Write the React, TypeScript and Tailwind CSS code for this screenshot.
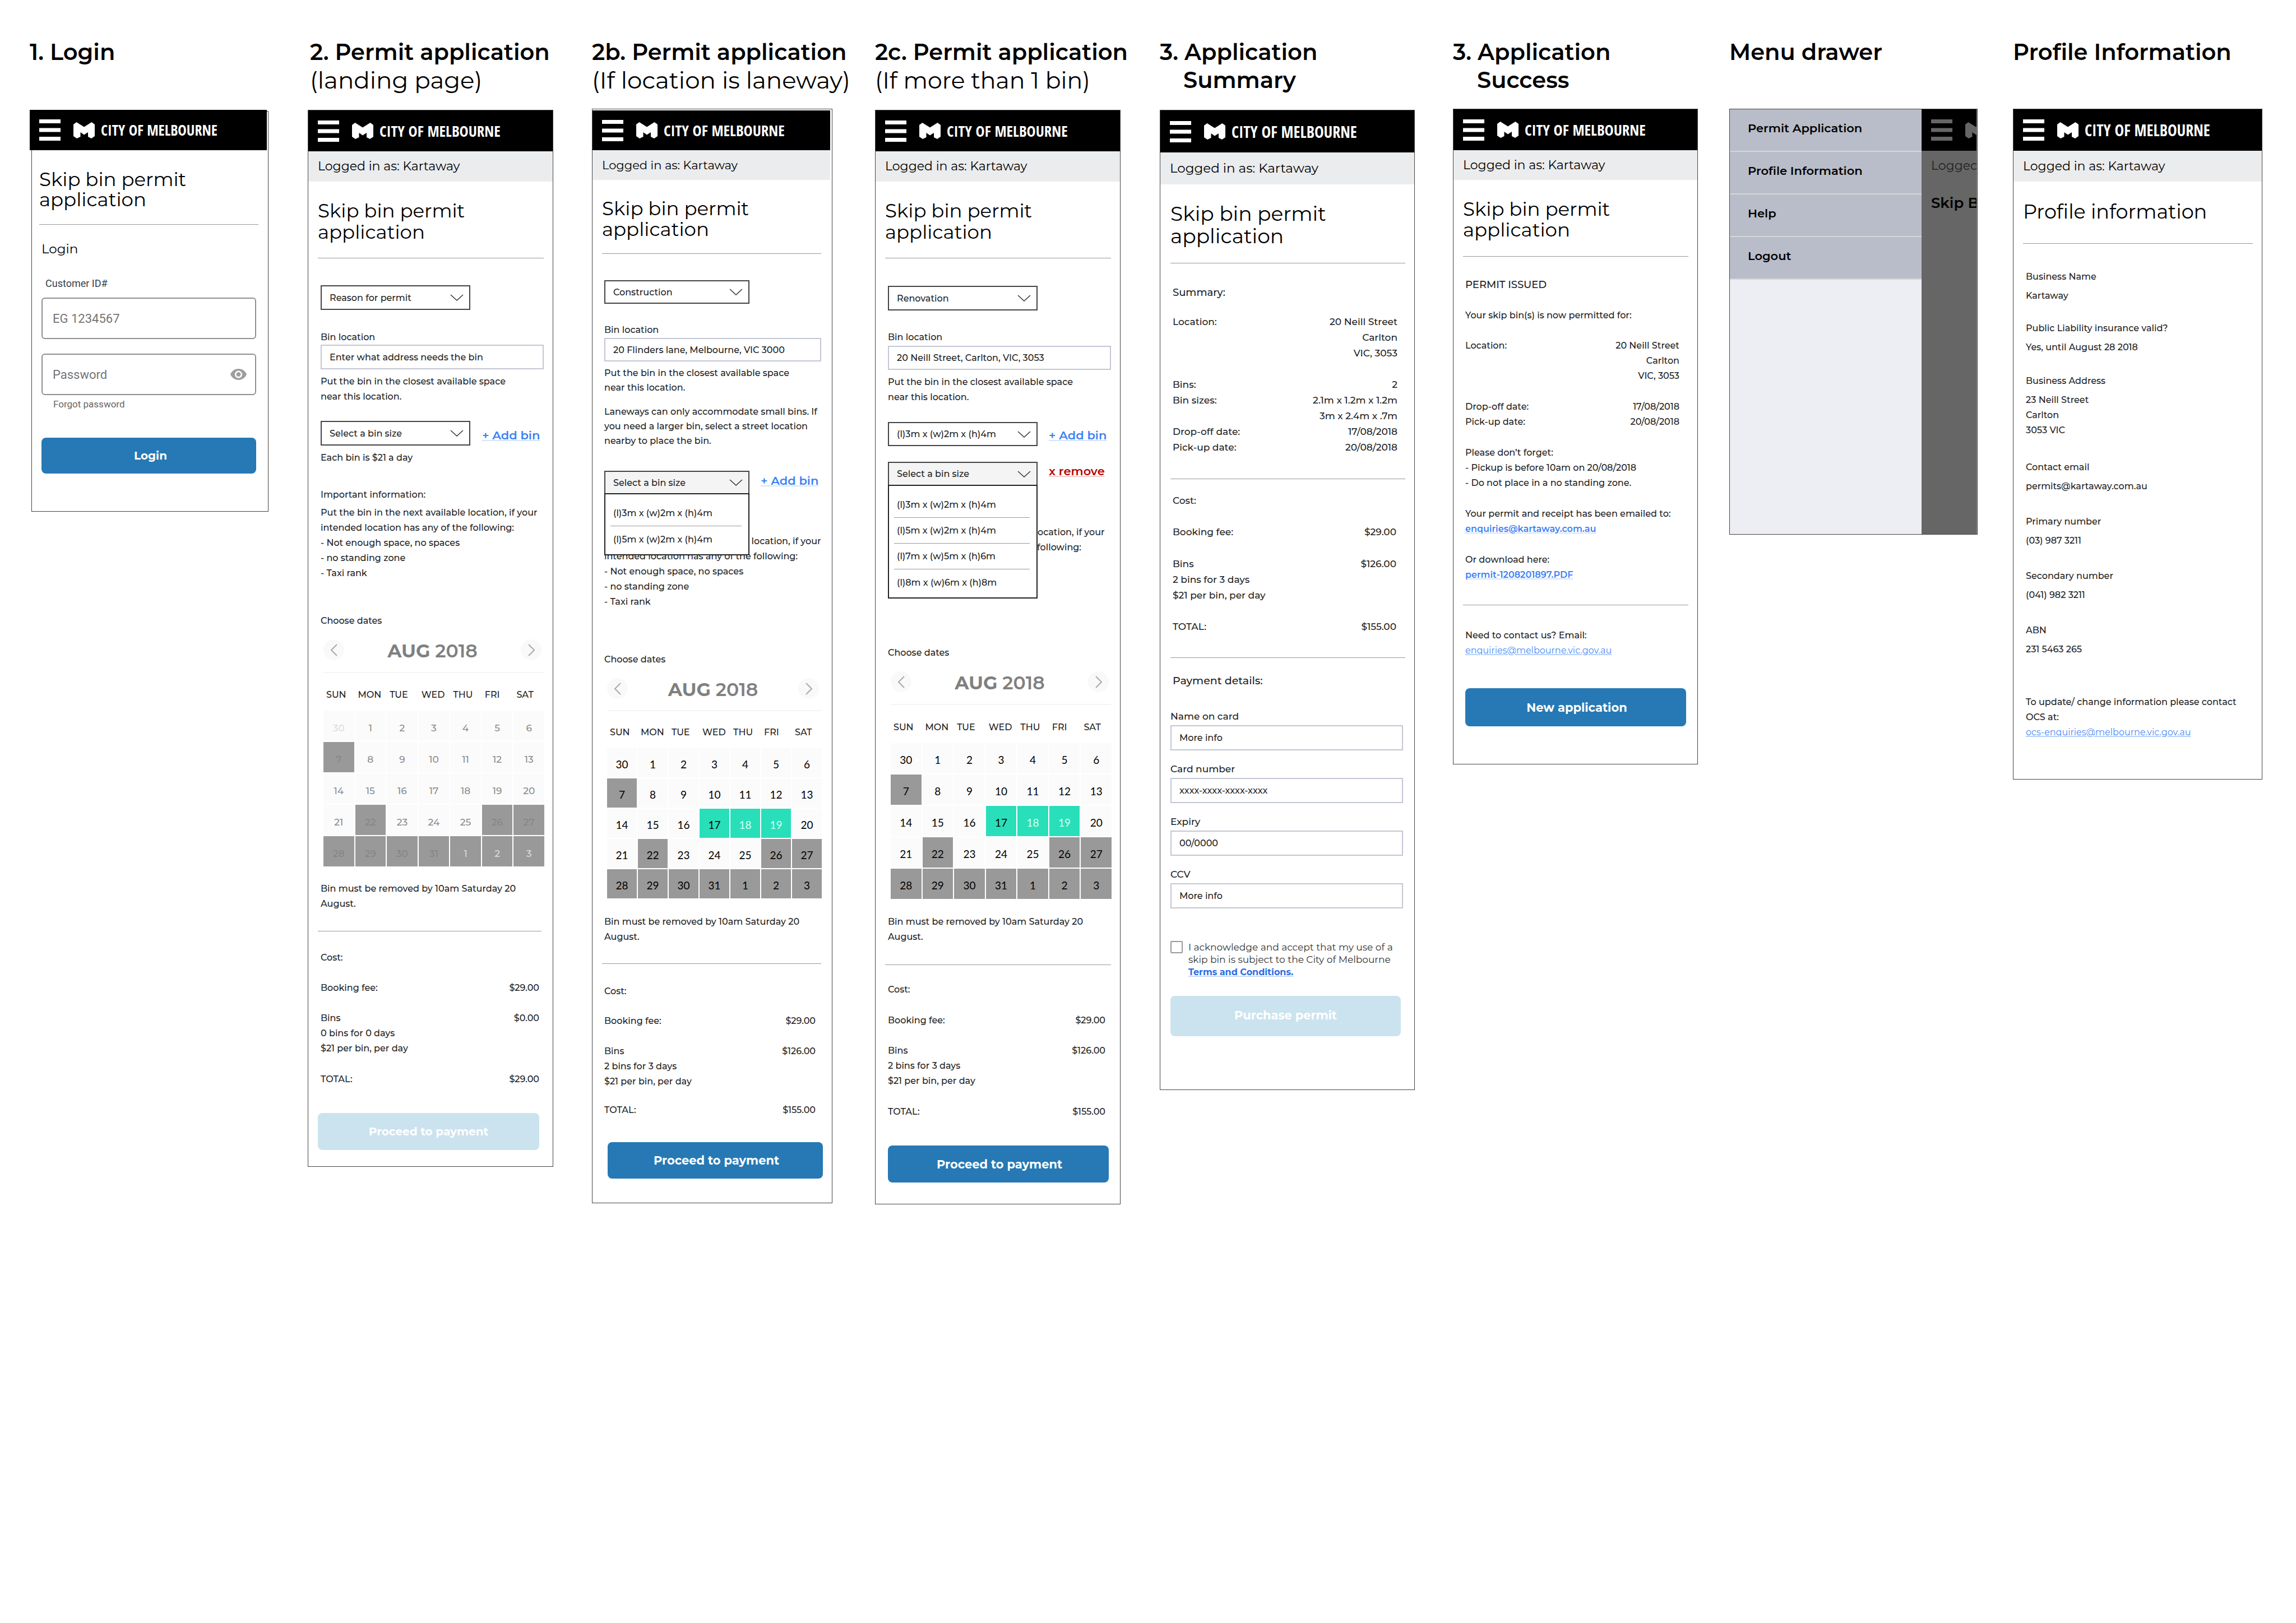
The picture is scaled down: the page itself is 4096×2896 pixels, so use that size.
import { useId, type ReactNode } from "react";

/* ---------- Brand header ---------- */

function MenuIcon() {
  return (
    <svg viewBox="0 0 38 38" className="h-[38px] w-[38px]" fill="currentColor" aria-hidden="true">
      <rect x="0" y="0" width="38" height="7" />
      <rect x="0" y="15.5" width="38" height="7" />
      <rect x="0" y="31" width="38" height="7" />
    </svg>
  );
}

function BrandMark() {
  return (
    <svg viewBox="0 0 38 29" className="h-[29px] w-[38px] shrink-0" fill="currentColor" aria-hidden="true">
      <path d="M0 4 5.5 0 19 8.5 32.5 0 38 4V25L32 29 26 26V18L19 22.5 12.5 18V26L6 29 0 25Z" />
    </svg>
  );
}

function Header({
  className = "h-[73px]",
  tone = "text-white",
  wordmark = "text-[27px]",
}: {
  className?: string;
  tone?: string;
  wordmark?: string;
}) {
  return (
    <header className={`flex items-center bg-black pl-[17px] ${tone} ${className}`}>
      <button type="button" aria-label="Open menu" className="shrink-0">
        <MenuIcon />
      </button>
      <div className="ml-[23px] flex items-center gap-[11px]">
        <BrandMark />
        <span className={`whitespace-nowrap font-['Open_Sans_Condensed','Roboto_Condensed',sans-serif] leading-[30px] font-bold ${wordmark}`}>
          CITY OF MELBOURNE
        </span>
      </div>
    </header>
  );
}

function LoggedIn({ className = "h-[54px] text-[22px]" }: { className?: string }) {
  return (
    <p className={`flex items-center bg-[#ebecee] pb-px pl-[17px] font-normal whitespace-nowrap text-black ${className}`}>
      Logged in as: Kartaway
    </p>
  );
}

/* ---------- Shared pieces ---------- */

function Screen({ lines, frame, children }: { lines: ReactNode; frame: string; children: ReactNode }) {
  return (
    <section className="min-w-0">
      <h2 className="min-h-[194px] pt-[68px] text-[40px] leading-[50px] font-semibold whitespace-nowrap text-black">
        {lines}
      </h2>
      <div className={`w-full border border-[#444] bg-white text-[16px] leading-[27px] font-medium text-[#222] ${frame}`}>
        {children}
      </div>
    </section>
  );
}

function Title({ className }: { className: string }) {
  return (
    <h1 className={`font-normal text-black ${className}`}>
      Skip bin permit
      <br />
      application
    </h1>
  );
}

function Rule({ className }: { className: string }) {
  return <hr className={`h-[2px] border-0 border-t border-[#999] ${className}`} />;
}

function SelectBox({
  value,
  label,
  className,
  open = false,
  options,
}: {
  value: string;
  label: string;
  className: string;
  open?: boolean;
  options?: string[];
}) {
  return (
    <div className={`relative shrink-0 ${className}`}>
      <select
        aria-label={label}
        defaultValue={value}
        className={`h-full w-full appearance-none border-2 border-[#444] pl-[14px] text-[16px] text-[#222] ${open ? "bg-[#f4f4f4]" : "bg-white"}`}
      >
        <option>{value}</option>
      </select>
      <svg
        viewBox="0 0 24 12"
        className="pointer-events-none absolute top-1/2 right-3 h-3 w-6 -translate-y-1/2"
        fill="none"
        stroke="#333"
        strokeWidth="1.5"
        aria-hidden="true"
      >
        <path d="M1 1 12 11 23 1" />
      </svg>
      {options && (
        <ul className="absolute top-full left-0 z-10 -mt-[2px] w-full border-2 border-[#222] bg-white pt-[11px] pr-3 pb-1 pl-[9px]">
          {options.map((o) => (
            <li key={o} className="flex h-[46px] items-center border-b border-[#999] pl-[5px] last:border-b-0">
              {o}
            </li>
          ))}
        </ul>
      )}
    </div>
  );
}

function TextField({
  label,
  value,
  labelClass,
  inputClass,
}: {
  label: string;
  value: string;
  labelClass: string;
  inputClass: string;
}) {
  const id = useId();
  return (
    <div>
      <label htmlFor={id} className={`block ${labelClass}`}>
        {label}
      </label>
      <input
        id={id}
        defaultValue={value}
        className={`block w-full border-2 border-[#c3c7d4] bg-white pl-[14px] text-[16px] text-[#222] ${inputClass}`}
      />
    </div>
  );
}

function LinkButton({ children, className }: { children: ReactNode; className: string }) {
  return (
    <button
      type="button"
      className={`self-start text-[21px] leading-[27px] font-semibold whitespace-nowrap underline decoration-2 underline-offset-1 ${className}`}
    >
      {children}
    </button>
  );
}

const addBinTone = "text-[#3a80f6] decoration-[#d5e3fe]";

/* ---------- Calendar ---------- */

const DAYS = ["SUN", "MON", "TUE", "WED", "THU", "FRI", "SAT"];
const WEEKS = [
  ["30", "1", "2", "3", "4", "5", "6"],
  ["7", "8", "9", "10", "11", "12", "13"],
  ["14", "15", "16", "17", "18", "19", "20"],
  ["21", "22", "23", "24", "25", "26", "27"],
  ["28", "29", "30", "31", "1", "2", "3"],
];
const isBlocked = (w: number, d: string) => w === 4 || (w === 1 && d === "7") || (w === 3 && ["22", "26", "27"].includes(d));

function cellTone(active: boolean, w: number, d: string) {
  if (isBlocked(w, d)) {
    if (active) return "bg-[#999] text-black";
    return w === 4 && d.length === 1 ? "bg-[#999] text-[#dcdcdc]" : "bg-[#999] text-[#858585]";
  }
  if (active) {
    if (d === "17") return "bg-[#29dfb9] text-black";
    if (d === "18" || d === "19") return "bg-[#29dfb9] text-[#d9fff6]";
    return "bg-[#fbfbfb] text-black";
  }
  return w === 0 && d === "30" ? "bg-[#fbfbfb] text-[#dcdcdc]" : "bg-[#fbfbfb] text-[#8c8c8c]";
}

function MonthButton({ label, d }: { label: string; d: string }) {
  return (
    <button type="button" aria-label={label} className="flex h-[37px] w-[37px] items-center justify-center rounded-full bg-[#f9f9f9]">
      <svg viewBox="0 0 12 22" className="h-[22px] w-3" fill="none" stroke="#aaa" strokeWidth="2" aria-hidden="true">
        <path d={d} />
      </svg>
    </button>
  );
}

function Calendar({
  active,
  navClass,
  ruleClass,
  headClass,
  gridGap,
  cellClass,
}: {
  active: boolean;
  navClass: string;
  ruleClass: string;
  headClass: string;
  gridGap: string;
  cellClass: string;
}) {
  return (
    <div className="ml-[5px]">
      <div className={`mr-1 flex items-center justify-between ${navClass}`}>
        <MonthButton label="Previous month" d="M11 1 1 11 11 21" />
        <h3 className="pt-1 text-[33px] leading-[37px] text-[#808080]">
          <span className="font-bold">AUG</span> <span className="font-semibold">2018</span>
        </h3>
        <MonthButton label="Next month" d="M1 1 11 11 1 21" />
      </div>
      <div className={`h-[2px] bg-[#f4f4f4] ${ruleClass}`} />
      <div className="-mr-[3px]">
        <table className="w-full table-fixed border-collapse">
          <thead>
            <tr>
              {DAYS.map((d) => (
                <th key={d} scope="col" className={`p-0 pl-[5px] text-left font-medium ${headClass}`}>
                  {d}
                </th>
              ))}
            </tr>
            <tr aria-hidden="true">
              <td colSpan={7} className={`p-0 ${gridGap}`} />
            </tr>
          </thead>
          <tbody>
            {WEEKS.map((week, w) => (
              <tr key={w}>
                {week.map((d) => (
                  <td key={d} className="p-0 pr-[2px] pb-[2px]">
                    <button
                      type="button"
                      disabled={isBlocked(w, d)}
                      className={`block w-full ${active ? "pt-1 font-['Lato',sans-serif] text-[19px] font-normal" : "pt-2 text-[17px] font-medium"} ${cellClass} ${cellTone(active, w, d)}`}
                    >
                      {d}
                    </button>
                  </td>
                ))}
              </tr>
            ))}
          </tbody>
        </table>
      </div>
    </div>
  );
}

/* ---------- Key/value rows ---------- */

function Row({ label, value }: { label: ReactNode; value?: ReactNode }) {
  return (
    <div className="flex justify-between">
      <dt>{label}</dt>
      <dd className="text-right">{value}</dd>
    </div>
  );
}

function BinsLabel({ count, days }: { count: number; days: number }) {
  return (
    <>
      Bins
      <br />
      {count} bins for {days} days
      <br />
      $21 per bin, per day
    </>
  );
}

function ImportantInfo({ className }: { className: string }) {
  return (
    <div className={className}>
      <p>Important information:</p>
      <p className="mt-[5px] whitespace-nowrap">
        Put the bin in the next available location, if your
        <br />
        intended location has any of the following:
      </p>
      <ul>
        <li>- Not enough space, no spaces</li>
        <li>- no standing zone</li>
        <li>- Taxi rank</li>
      </ul>
    </div>
  );
}

function ClosestSpace({ className }: { className: string }) {
  return (
    <p className={`whitespace-nowrap ${className}`}>
      Put the bin in the closest available space
      <br />
      near this location.
    </p>
  );
}

function RemovalNote({ className }: { className: string }) {
  return (
    <p className={className}>
      Bin must be removed by 10am Saturday 20
      <br />
      August.
    </p>
  );
}

/* ---------- Screens ---------- */

function LoginScreen() {
  return (
    <section className="min-w-0">
      <h2 className="min-h-[194px] pt-[68px] text-[40px] leading-[50px] font-semibold whitespace-nowrap text-black">1. Login</h2>
      <div className="mt-1 ml-[3px] w-full max-w-[423px] border border-[#444] bg-white pb-[67px]">
        <div className="-mt-[3px] mr-[2px] -ml-1">
          <Header className="h-[72px]" wordmark="text-[26px]" />
        </div>
        <form className="pr-[17px] pl-[13px]" onSubmit={(e) => e.preventDefault()}>
          <Title className="mt-[34px] text-[34px] leading-[36px]" />
          <Rule className="mt-[26px]" />
          <div className="px-1">
            <h3 className="mt-[27px] text-[23px] leading-[30px] text-black">Login</h3>
            <div className="font-['Roboto',sans-serif]">
              <label htmlFor="customer-id" className="mt-[33px] block pl-[7px] text-[18px] leading-[27px] text-[#37424a]">
                Customer ID#
              </label>
              <input
                id="customer-id"
                placeholder="EG 1234567"
                className="mt-3 block h-[74px] w-full rounded-[6px] border-2 border-[#8f8f8f] bg-white px-[18px] text-[22px] placeholder:text-[#757575]"
              />
              <div className="relative mt-[26px]">
                <input
                  type="password"
                  aria-label="Password"
                  placeholder="Password"
                  className="block h-[74px] w-full rounded-[6px] border-2 border-[#8f8f8f] bg-white px-[18px] text-[22px] placeholder:text-[#757575]"
                />
                <button type="button" aria-label="Show password" className="absolute top-[26px] right-[17px]">
                  <svg viewBox="1 4.5 22 15" className="h-[22px] w-[29px]" fill="#9e9e9e" aria-hidden="true">
                    <path d="M12 4.5C7 4.5 2.73 7.61 1 12c1.73 4.39 6 7.5 11 7.5s9.27-3.11 11-7.5c-1.73-4.39-6-7.5-11-7.5zM12 17c-2.76 0-5-2.24-5-5s2.24-5 5-5 5 2.24 5 5-2.24 5-5 5zm0-8c-1.66 0-3 1.34-3 3s1.34 3 3 3 3-1.34 3-3-1.34-3-3-3z" />
                  </svg>
                </button>
              </div>
              <a href="#forgot" className="mt-[5px] block pl-[21px] text-[17px] leading-[22px] text-[#666]">
                Forgot password
              </a>
            </div>
            <button type="submit" className="mt-[49px] block h-[64px] w-full rounded-lg bg-[#2679b4] pl-[6px] text-[20px] font-bold text-white">
              Login
            </button>
          </div>
        </form>
      </div>
    </section>
  );
}

function LandingScreen() {
  return (
    <Screen
      frame="mt-[2px] max-w-[438px] pb-[29px]"
      lines={
        <span className="block pl-1">
          2. Permit application
          <span className="block text-[42px] font-normal">(landing page)</span>
        </span>
      }
    >
      <Header />
      <LoggedIn />
      <div className="pr-4 pl-[17px]">
        <Title className="mt-[33px] text-[34px] leading-[38px]" />
        <Rule className="mt-[27px]" />
        <div className="pl-[5px]">
          <SelectBox label="Reason for permit" value="Reason for permit" className="mt-[47px] h-[44px] w-[267px]" />
          <TextField label="Bin location" value="Enter what address needs the bin" labelClass="mt-[35px]" inputClass="h-[44px]" />
          <ClosestSpace className="mt-2" />
          <div className="mt-[30px] flex gap-[21px]">
            <SelectBox label="Bin size" value="Select a bin size" className="h-[44px] w-[267px]" />
            <LinkButton className={`mt-3 ${addBinTone}`}>+ Add bin</LinkButton>
          </div>
          <p className="mt-2">Each bin is $21 a day</p>
          <ImportantInfo className="mt-[39px]" />
          <p className="mt-[58px]">Choose dates</p>
          <Calendar active={false} navClass="mt-[18px]" ruleClass="mt-[19px]" headClass="pt-[25px]" gridGap="h-[15px]" cellClass="h-[54px]" />
          <RemovalNote className="mt-[24px]" />
        </div>
        <Rule className="mt-[35px] mr-1" />
        <div className="pl-[5px]">
          <p className="mt-8">Cost:</p>
          <dl className="pr-2">
            <div className="mt-[27px]">
              <Row label="Booking fee:" value="$29.00" />
            </div>
            <div className="mt-[27px]">
              <Row label={<BinsLabel count={0} days={0} />} value="$0.00" />
            </div>
            <div className="mt-[28px]">
              <Row label="TOTAL:" value="$29.00" />
            </div>
          </dl>
        </div>
        <div className="pr-2">
          <button type="button" disabled className="mt-[47px] block h-[66px] w-full rounded-lg bg-[#cbe3ee] text-[20px] font-bold text-white">
            Proceed to payment
          </button>
        </div>
      </div>
    </Screen>
  );
}

function LanewayScreen() {
  return (
    <Screen
      frame="max-w-[429px] pt-[2px] pb-[43px]"
      lines={
        <>
          2b. Permit application
          <span className="block text-[42px] font-normal">(If location is laneway)</span>
        </>
      }
    >
      <div className="mr-[3px]">
        <Header className="h-[71px]" />
        <LoggedIn className="h-[53px] text-[21px]" />
      </div>
      <div className="pr-[19px] pl-[17px]">
        <Title className="mt-[33px] text-[34px] leading-[37px]" />
        <Rule className="mt-6" />
        <div className="pl-1">
          <SelectBox label="Reason for permit" value="Construction" className="mt-[46px] h-[42px] w-[259px]" />
          <TextField label="Bin location" value="20 Flinders lane, Melbourne, VIC 3000" labelClass="mt-[33px]" inputClass="mt-[1px] h-[42px]" />
          <div className="leading-[26px]">
            <ClosestSpace className="mt-2" />
            <p className="mt-[17px] whitespace-nowrap">
              Laneways can only accommodate small bins. If
              <br />
              you need a larger bin, select a street location
              <br />
              nearby to place the bin.
            </p>
          </div>
          <div className="mt-[40px] flex gap-[20px]">
            <SelectBox
              open
              label="Bin size"
              value="Select a bin size"
              options={["(l)3m x (w)2m x (h)4m", "(l)5m x (w)2m x (h)4m"]}
              className="h-[42px] w-[259px]"
            />
            <LinkButton className={`mt-1 ${addBinTone}`}>+ Add bin</LinkButton>
          </div>
          <ImportantInfo className="mt-[38px]" />
          <p className="mt-[76px]">Choose dates</p>
          <Calendar active navClass="mt-[18px]" ruleClass="mt-[18px]" headClass="pt-[24px]" gridGap="h-[15px]" cellClass="h-[52px]" />
          <RemovalNote className="mt-[26px]" />
        </div>
        <Rule className="mt-[34px]" />
        <div className="pl-1">
          <p className="mt-[34px]">Cost:</p>
          <dl className="pr-[10px]">
            <div className="mt-[26px]">
              <Row label="Booking fee:" value="$29.00" />
            </div>
            <div className="mt-[27px]">
              <Row label={<BinsLabel count={2} days={3} />} value="$126.00" />
            </div>
            <div className="mt-6">
              <Row label="TOTAL:" value="$155.00" />
            </div>
          </dl>
          <div className="-mr-[3px] pl-[6px]">
            <button type="button" className="mt-11 block h-[65px] w-full rounded-lg bg-[#2679b4] pl-1 text-[21px] font-bold text-white">
              Proceed to payment
            </button>
          </div>
        </div>
      </div>
    </Screen>
  );
}

function MultiBinScreen() {
  return (
    <Screen
      frame="mt-[2px] max-w-[438px] pb-[38px]"
      lines={
        <>
          2c. Permit application
          <span className="block text-[41px] font-normal">(If more than 1 bin)</span>
        </>
      }
    >
      <Header />
      <LoggedIn />
      <div className="pr-4 pl-[17px]">
        <Title className="mt-[33px] text-[34px] leading-[38px]" />
        <Rule className="mt-[27px]" />
        <div className="pl-[5px]">
          <SelectBox label="Reason for permit" value="Renovation" className="mt-12 h-[44px] w-[267px]" />
          <TextField label="Bin location" value="20 Neill Street, Carlton, VIC, 3053" labelClass="mt-[34px]" inputClass="mt-[2px] h-[43px]" />
          <ClosestSpace className="mt-2" />
          <div className="mt-[31px] flex gap-[20px]">
            <SelectBox label="First bin size" value="(l)3m x (w)2m x (h)4m" className="h-[43px] w-[267px]" />
            <LinkButton className={`mt-[10px] ${addBinTone}`}>+ Add bin</LinkButton>
          </div>
          <div className="mt-[28px] flex gap-[20px]">
            <SelectBox
              open
              label="Second bin size"
              value="Select a bin size"
              options={["(l)3m x (w)2m x (h)4m", "(l)5m x (w)2m x (h)4m", "(l)7m x (w)5m x (h)6m", "(l)8m x (w)6m x (h)8m"]}
              className="h-[43px] w-[267px]"
            />
            <LinkButton className="mt-[3px] text-[#b80000] decoration-[#f5cccc]">x remove</LinkButton>
          </div>
          <ImportantInfo className="mt-[37px]" />
          <p className="mt-20">Choose dates</p>
          <Calendar active navClass="mt-[18px]" ruleClass="mt-[19px]" headClass="pt-[26px]" gridGap="h-[15px]" cellClass="h-[54px]" />
          <RemovalNote className="mt-[25px]" />
        </div>
        <Rule className="mt-9" />
        <div className="pl-[5px]">
          <p className="mt-[29px]">Cost:</p>
          <dl className="pr-[10px]">
            <div className="mt-[28px]">
              <Row label="Booking fee:" value="$29.00" />
            </div>
            <div className="mt-[27px]">
              <Row label={<BinsLabel count={2} days={3} />} value="$126.00" />
            </div>
            <div className="mt-[28px]">
              <Row label="TOTAL:" value="$155.00" />
            </div>
          </dl>
          <div className="pr-1">
            <button type="button" className="mt-[47px] block h-[66px] w-full rounded-lg bg-[#2679b4] pl-1 text-[21px] font-bold text-white">
              Proceed to payment
            </button>
          </div>
        </div>
      </div>
    </Screen>
  );
}

function SummaryScreen() {
  return (
    <Screen
      frame="mt-[2px] max-w-[455px] pb-[95px]"
      lines={
        <>
          3. Application
          <span className="block pl-[42px]">Summary</span>
        </>
      }
    >
      <Header className="h-[75px]" wordmark="text-[28px]" />
      <LoggedIn className="h-[57px] text-[23px]" />
      <div className="pr-4 pl-[18px] text-[17px] leading-[28px]">
        <Title className="mt-[32px] text-[36px] leading-[40px]" />
        <Rule className="mt-[28px]" />
        <div className="pl-1">
          <h3 className="mt-[38px] text-[18px] leading-[27px]">Summary:</h3>
          <dl className="mt-[24px] pr-[14px]">
            <Row
              label="Location:"
              value={
                <>
                  20 Neill Street
                  <br />
                  Carlton
                  <br />
                  VIC, 3053
                </>
              }
            />
            <div className="mt-[28px]">
              <Row label="Bins:" value="2" />
              <Row
                label="Bin sizes:"
                value={
                  <>
                    2.1m x 1.2m x 1.2m
                    <br />
                    3m x 2.4m x .7m
                  </>
                }
              />
              <Row label="Drop-off date:" value="17/08/2018" />
              <Row label="Pick-up date:" value="20/08/2018" />
            </div>
          </dl>
        </div>
        <Rule className="mt-[42px]" />
        <div className="pl-1">
          <p className="mt-[23px]">Cost:</p>
          <dl className="pr-4">
            <div className="mt-[28px]">
              <Row label="Booking fee:" value="$29.00" />
            </div>
            <div className="mt-[29px]">
              <Row label={<BinsLabel count={2} days={3} />} value="$126.00" />
            </div>
            <div className="mt-[28px]">
              <Row label="TOTAL:" value="$155.00" />
            </div>
          </dl>
        </div>
        <Rule className="mt-[41px]" />
        <form onSubmit={(e) => e.preventDefault()}>
          <h3 className="mt-[26px] pl-1 text-[19px]">Payment details:</h3>
          <div className="flex flex-col gap-5 pt-4 pr-1 leading-[27px]">
            <TextField label="Name on card" value="More info" labelClass="mt-5" inputClass="mt-[2px] h-[45px]" />
            <TextField label="Card number" value="xxxx-xxxx-xxxx-xxxx" labelClass="" inputClass="mt-[2px] h-[45px]" />
            <TextField label="Expiry" value="00/0000" labelClass="" inputClass="mt-[2px] h-[45px]" />
            <TextField label="CCV" value="More info" labelClass="" inputClass="mt-[2px] h-[45px]" />
          </div>
          <div className="mt-[58px] flex gap-[10px] text-[17px] leading-[22px] font-normal text-[#333]">
            <input id="accept" type="checkbox" className="h-[22px] w-[22px] shrink-0 appearance-none rounded-[2px] border-2 border-[#999] bg-white" />
            <label htmlFor="accept" className="whitespace-nowrap">
              I acknowledge and accept that my use of a
              <br />
              skip bin is subject to the City of Melbourne
              <br />
              <a href="#terms" className="text-[16px] leading-[24px] font-bold text-[#2c6be2] underline decoration-[#c6d9fb] decoration-2 underline-offset-1">
                Terms and Conditions.
              </a>
            </label>
          </div>
          <div className="pr-2">
            <button type="submit" disabled className="mt-[30px] block h-[72px] w-full rounded-lg bg-[#cbe3ee] pb-[3px] text-[21px] font-bold text-white">
              Purchase permit
            </button>
          </div>
        </form>
      </div>
    </Screen>
  );
}

function SuccessScreen() {
  return (
    <Screen
      frame="max-w-[437px] pb-[67px]"
      lines={
        <>
          3. Application
          <span className="block pl-[43px]">Success</span>
        </>
      }
    >
      <Header />
      <LoggedIn className="h-[53px] text-[22px]" />
      <div className="pr-4 pl-[17px]">
        <Title className="mt-[34px] text-[34px] leading-[37px]" />
        <Rule className="mt-[28px]" />
        <div className="pl-1">
          <h3 className="mt-9 text-[18px]">PERMIT ISSUED</h3>
          <p className="mt-[27px]">Your skip bin(s) is now permitted for:</p>
          <dl className="mt-[27px] pr-4">
            <Row
              label="Location:"
              value={
                <>
                  20 Neill Street
                  <br />
                  Carlton
                  <br />
                  VIC, 3053
                </>
              }
            />
            <div className="mt-[28px]">
              <Row label="Drop-off date:" value="17/08/2018" />
              <Row label="Pick-up date:" value="20/08/2018" />
            </div>
          </dl>
          <p className="mt-[28px]">Please don’t forget:</p>
          <ul>
            <li>- Pickup is before 10am on 20/08/2018</li>
            <li>- Do not place in a no standing zone.</li>
          </ul>
          <p className="mt-[28px] whitespace-nowrap">Your permit and receipt has been emailed to:</p>
          <p>
            <a href="mailto:enquiries@kartaway.com.au" className="font-semibold text-[#3a80f6] underline decoration-[#d5e3fe] decoration-2 underline-offset-1">
              enquiries@kartaway.com.au
            </a>
          </p>
          <p className="mt-[28px]">Or download here:</p>
          <p>
            <a href="#permit" className="font-semibold text-[#3a80f6] underline decoration-[#d5e3fe] decoration-2 underline-offset-1">
              permit-1208201897.PDF
            </a>
          </p>
        </div>
        <Rule className="mt-10" />
        <div className="pl-1">
          <p className="mt-[39px]">Need to contact us? Email:</p>
          <p>
            <a href="mailto:enquiries@melbourne.vic.gov.au" className="font-normal text-[#4b8bf7] underline decoration-[#b5d0fc] decoration-2 underline-offset-1">
              enquiries@melbourne.vic.gov.au
            </a>
          </p>
          <div className="pr-1">
            <button type="button" className="mt-[54px] block h-[68px] w-full rounded-lg bg-[#2679b4] pl-1 text-[21px] font-bold text-white">
              New application
            </button>
          </div>
        </div>
      </div>
    </Screen>
  );
}

function DrawerScreen() {
  return (
    <Screen frame="max-w-[443px]" lines="Menu drawer">
      <div className="flex min-h-[758px]">
        <nav className="w-[342px] shrink-0 bg-[#eceef4]" aria-label="Main">
          {["Permit Application", "Profile Information", "Help", "Logout"].map((item) => (
            <a
              key={item}
              href="#menu"
              className="flex h-[76px] items-center border-b-2 border-[#d6d6d6] bg-[#b9bdc9] pb-[7px] pl-8 text-[21px] font-semibold text-black"
            >
              {item}
            </a>
          ))}
        </nav>
        <div className="min-w-0 flex-1 overflow-hidden border-r border-[#888] bg-[#666] whitespace-nowrap">
          <Header className="h-[74px]" tone="text-[#666]" />
          <p className="pl-[17px] text-[22px] leading-[54px] font-normal text-[#222]">Logged in as: Kartaway</p>
          <p className="mt-[20px] pl-[17px] text-[26px] leading-[38px] font-semibold text-black">Skip Bin</p>
        </div>
      </div>
    </Screen>
  );
}

function ProfileItem({ term, children, className }: { term: string; children: ReactNode; className: string }) {
  return (
    <div className={className}>
      <dt>{term}</dt>
      <dd className="mt-[7px]">{children}</dd>
    </div>
  );
}

function ProfileScreen() {
  return (
    <Screen frame="max-w-[445px] pb-[70px]" lines={<span className="block">Profile Information</span>}>
      <Header className="h-[74px]" wordmark="text-[28px]" />
      <LoggedIn className="h-[55px] text-[22px]" />
      <div className="pr-4 pl-[17px]">
        <h1 className="mt-[35px] text-[35px] leading-[38px] font-normal text-black">Profile information</h1>
        <Rule className="mt-[37px]" />
        <div className="pl-[5px]">
          <dl>
            <ProfileItem term="Business Name" className="mt-[44px]">
              Kartaway
            </ProfileItem>
            <ProfileItem term="Public Liability insurance valid?" className="mt-[31px]">
              Yes, until August 28 2018
            </ProfileItem>
            <ProfileItem term="Business Address" className="mt-[33px]">
              23 Neill Street
              <br />
              Carlton
              <br />
              3053 VIC
            </ProfileItem>
            <ProfileItem term="Contact email" className="mt-[39px]">
              permits@kartaway.com.au
            </ProfileItem>
            <ProfileItem term="Primary number" className="mt-[36px]">
              (03) 987 3211
            </ProfileItem>
            <ProfileItem term="Secondary number" className="mt-[36px]">
              (041) 982 3211
            </ProfileItem>
            <ProfileItem term="ABN" className="mt-[36px]">
              231 5463 265
            </ProfileItem>
          </dl>
          <p className="mt-[67px] whitespace-nowrap">
            To update/ change information please contact
            <br />
            OCS at:
          </p>
          <p>
            <a href="mailto:ocs-enquiries@melbourne.vic.gov.au" className="font-normal text-[#4b8bf7] underline decoration-[#b5d0fc] decoration-2 underline-offset-1">
              ocs-enquiries@melbourne.vic.gov.au
            </a>
          </p>
        </div>
      </div>
    </Screen>
  );
}

export default function App() {
  return (
    <main className="min-h-screen bg-white pl-[53px] font-['Montserrat','Inter',sans-serif]">
      <div className="grid grid-cols-[496fr_507fr_505fr_508fr_523fr_493fr_506fr_505fr] items-start">
        <LoginScreen />
        <LandingScreen />
        <LanewayScreen />
        <MultiBinScreen />
        <SummaryScreen />
        <SuccessScreen />
        <DrawerScreen />
        <ProfileScreen />
      </div>
    </main>
  );
}
